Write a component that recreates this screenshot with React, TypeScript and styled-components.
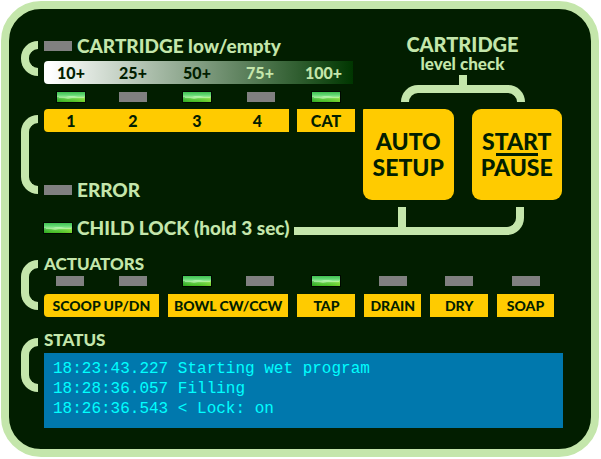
import React from "react";
import styled, { createGlobalStyle } from "styled-components";

const color = {
  mint: "#c4e6ab",
  night: "#021e00",
  amber: "#ffcb00",
  lampOff: "#808080",
  screen: "#0078ad",
  cyan: "#00ffff",
};

const GlobalStyle = createGlobalStyle`
  * { box-sizing: border-box; }
  body {
    margin: 0;
    background: #fff;
    font-family: Lato, "Open Sans", sans-serif;
    font-weight: 900;
    color: ${color.mint};
  }
`;

const Panel = styled.main`
  margin: 1px 2px 1px 1px;
  padding: 24px 28px 21px 12px;
  background: ${color.night};
  border: 8px solid ${color.mint};
  border-radius: 40px;
`;

const TopArea = styled.div`
  display: grid;
  grid-template-columns: 1fr 199px;
  column-gap: 8px;
  padding-right: 1px;
`;

const Section = styled.section`
  display: grid;
  grid-template-columns: 17px 1fr;
  column-gap: 6px;
`;

const ActuatorSection = styled(Section)`
  margin-top: 20px;
`;

const StatusSection = styled(Section)`
  margin-top: 14px;
`;

const Bracket = styled.div<{ $top: number; $bottom: number }>`
  margin: ${(p) => p.$top}px 0 ${(p) => p.$bottom}px;
  border: 8px solid ${color.mint};
  border-right: 0;
  border-radius: 17px 0 0 17px;
`;

const Label = styled.div`
  display: flex;
  align-items: center;
  gap: 5px;
  height: 26px;
  font-size: 19px;
  line-height: 26px;
  white-space: nowrap;
`;

const ErrorLabel = styled(Label)`
  margin-top: 45px;
`;

const Heading = styled.h2`
  margin: 0;
  font-size: 17px;
  font-weight: 900;
  line-height: 18px;
`;

const LampShape = styled.svg`
  display: block;
  flex: none;
  width: 30px;
  height: 12px;
  margin: 0 -1px;
`;

const ScaleBar = styled.div`
  display: grid;
  grid-template-columns: 54fr 70fr 58fr 68fr 59fr;
  height: 23px;
  margin: 2px 2px 0 0;
  border-radius: 4px 0 0 4px;
  background: linear-gradient(90deg, #fff 2%, #2b5a2b 84%, #003600);
  font-size: 16px;
  line-height: 23px;
`;

const Mark = styled.span<{ $light?: boolean }>`
  text-align: center;
  color: ${(p) => (p.$light ? color.mint : color.night)};
`;

const LampRow = styled.div`
  display: grid;
  grid-template-columns: 54fr 70fr 58fr 70fr 59fr;
  justify-items: center;
  margin: 7px 0 6px;
`;

const KeyRow = styled.div`
  display: grid;
  grid-template-columns: 245fr 58fr;
  column-gap: 8px;
`;

const NumberKeys = styled.div`
  display: grid;
  grid-template-columns: 54fr 70fr 58fr 63fr;
  border-radius: 4px 0 0 4px;
  overflow: hidden;
`;

const Key = styled.button<{ $first?: boolean }>`
  height: 23px;
  padding: 0;
  border: 0;
  border-radius: ${(p) => (p.$first ? "4px 0 0 4px" : "0")};
  background: ${color.amber};
  color: ${color.night};
  font: inherit;
  font-size: 16px;
  line-height: 23px;
  white-space: nowrap;
`;

const ActuatorKey = styled(Key)`
  font-size: 14px;
`;

const SideColumn = styled.div`
  display: flex;
  flex-direction: column;
`;

const SideTitle = styled.h2`
  margin: 0;
  font-size: 20px;
  font-weight: 900;
  line-height: 22px;
  text-align: center;
`;

const SideNote = styled.p`
  margin: 0;
  font-size: 17px;
  line-height: 18px;
  text-align: center;
`;

const Stem = styled.div`
  align-self: center;
  width: 8px;
  height: 10px;
  margin-top: 2px;
  background: ${color.mint};
`;

const Arch = styled.div`
  align-self: center;
  width: 124px;
  height: 17px;
  border: 8px solid ${color.mint};
  border-bottom: 0;
  border-radius: 17px 17px 0 0;
`;

const BigKeys = styled.div`
  display: grid;
  grid-template-columns: 1fr 1fr;
  column-gap: 18px;
  margin-top: 7px;
`;

const BigKey = styled.button<{ $square?: boolean }>`
  display: flex;
  flex-direction: column;
  align-items: center;
  justify-content: center;
  height: 91px;
  padding: 0;
  border: 0;
  border-radius: ${(p) => (p.$square ? "1px" : "9px")} 9px 9px 9px;
  background: ${color.amber};
  color: ${color.night};
  font: inherit;
  font-size: 23px;
  line-height: 23px;
`;

const Rule = styled.span<{ $hidden?: boolean }>`
  width: 42px;
  height: 3px;
  background: ${(p) => (p.$hidden ? "transparent" : color.night)};
`;

const LockRow = styled.div`
  display: flex;
  align-items: flex-end;
  gap: 4px;
  height: 28px;
  margin: 4px 39px 0 23px;
`;

const LockLabel = styled(Label)`
  height: 18px;
  margin-bottom: -2px;
  line-height: 18px;
`;

const Wire = styled.div`
  display: flex;
  flex: 1;
  height: 28px;
`;

const WireStart = styled.div`
  flex: 1;
  border: solid ${color.mint};
  border-width: 0 8px 8px 0;
`;

const WireEnd = styled.div`
  width: 118px;
  border: solid ${color.mint};
  border-width: 0 8px 8px 0;
  border-radius: 0 0 17px 0;
`;

const Actuators = styled.div`
  display: grid;
  grid-template-columns: 115fr 121fr 58fr 57fr 58fr 57fr;
  column-gap: 9px;
  row-gap: 7px;
  margin-top: 2px;
  padding-right: 9px;
`;

const LampGroup = styled.div`
  display: flex;
  justify-content: center;
  gap: 35px;
`;

const Log = styled.div`
  height: 75px;
  margin-top: 4px;
  padding: 6px 9px;
  background: ${color.screen};
  color: ${color.cyan};
  font: 400 16px/20px "Liberation Mono", monospace;
  white-space: pre-wrap;
`;

function Lamp({ on = false }: { on?: boolean }) {
  const id = React.useId();
  return (
    <LampShape viewBox="0 0 30 12" role="img" aria-label={on ? "on" : "off"}>
      {on ? (
        <>
          <defs>
            <linearGradient id={id} x1="0" y1="0" x2="0" y2="1">
              <stop offset="0" stopColor="#3fbf50" />
              <stop offset="0.3" stopColor="#62d873" />
              <stop offset="0.5" stopColor="#98eb95" />
              <stop offset="0.7" stopColor="#5ccb45" />
              <stop offset="1" stopColor="#3db81c" />
            </linearGradient>
            <linearGradient id={id + "s"}>
              <stop offset="0" stopColor="#0a8a20" stopOpacity="0.35" />
              <stop offset="0.5" stopColor="#8fe040" stopOpacity="0.1" />
              <stop offset="1" stopColor="#b4f03c" stopOpacity="0.45" />
            </linearGradient>
          </defs>
          <rect width="30" height="12" fill="#000800" />
          <rect x="1" y="1" width="28" height="10" fill={`url(#${id})`} />
          <rect x="1" y="6" width="28" height="5" fill={`url(#${id}s)`} />
          <path d="M3 6h7l3-1h5l4 1h6v1H16l-4 1-4-1H3z" fill="#d8ffc9" opacity=".45" />
        </>
      ) : (
        <rect x="1" y="1" width="28" height="10" fill={color.lampOff} />
      )}
    </LampShape>
  );
}

const marks = [
  { text: "10+" },
  { text: "25+" },
  { text: "50+" },
  { text: "75+", light: true },
  { text: "100+", light: true },
];
const cartridgeLamps = [true, false, true, false, true];
const actuators = [
  { name: "SCOOP UP/DN", lamps: [false, false] },
  { name: "BOWL CW/CCW", lamps: [true, false] },
  { name: "TAP", lamps: [true] },
  { name: "DRAIN", lamps: [false] },
  { name: "DRY", lamps: [false] },
  { name: "SOAP", lamps: [false] },
];
const log = [
  "18:23:43.227 Starting wet program",
  "18:28:36.057 Filling",
  "18:26:36.543 < Lock: on",
];

export default function App() {
  return (
    <>
      <GlobalStyle />
      <Panel>
        <TopArea>
          <div>
            <Section>
              <Bracket $top={8} $bottom={8} />
              <div>
                <Label>
                  <Lamp />
                  CARTRIDGE low/empty
                </Label>
                <ScaleBar>
                  {marks.map((m) => (
                    <Mark key={m.text} $light={m.light}>
                      {m.text}
                    </Mark>
                  ))}
                </ScaleBar>
              </div>
            </Section>
            <Section>
              <Bracket $top={31} $bottom={9} />
              <div>
                <LampRow>
                  {cartridgeLamps.map((on, i) => (
                    <Lamp key={i} on={on} />
                  ))}
                </LampRow>
                <KeyRow>
                  <NumberKeys>
                    {["1", "2", "3", "4"].map((n) => (
                      <Key key={n}>{n}</Key>
                    ))}
                  </NumberKeys>
                  <Key>CAT</Key>
                </KeyRow>
                <ErrorLabel>
                  <Lamp />
                  ERROR
                </ErrorLabel>
              </div>
            </Section>
          </div>
          <SideColumn>
            <SideTitle>CARTRIDGE</SideTitle>
            <SideNote>level check</SideNote>
            <Stem />
            <Arch />
            <BigKeys>
              <BigKey $square>
                <span>AUTO</span>
                <Rule $hidden />
                <span>SETUP</span>
              </BigKey>
              <BigKey>
                <span>START</span>
                <Rule />
                <span>PAUSE</span>
              </BigKey>
            </BigKeys>
          </SideColumn>
        </TopArea>
        <LockRow>
          <LockLabel>
            <Lamp on />
            CHILD LOCK (hold 3 sec)
          </LockLabel>
          <Wire>
            <WireStart />
            <WireEnd />
          </Wire>
        </LockRow>
        <ActuatorSection>
          <Bracket $top={5} $bottom={7} />
          <div>
            <Heading>ACTUATORS</Heading>
            <Actuators>
              {actuators.map((a) => (
                <LampGroup key={a.name}>
                  {a.lamps.map((on, i) => (
                    <Lamp key={i} on={on} />
                  ))}
                </LampGroup>
              ))}
              {actuators.map((a, i) => (
                <ActuatorKey key={a.name} $first={i === 0}>
                  {a.name}
                </ActuatorKey>
              ))}
            </Actuators>
          </div>
        </ActuatorSection>
        <StatusSection>
          <Bracket $top={7} $bottom={36} />
          <div>
            <Heading>STATUS</Heading>
            <Log role="log">{log.join("\n")}</Log>
          </div>
        </StatusSection>
      </Panel>
    </>
  );
}
